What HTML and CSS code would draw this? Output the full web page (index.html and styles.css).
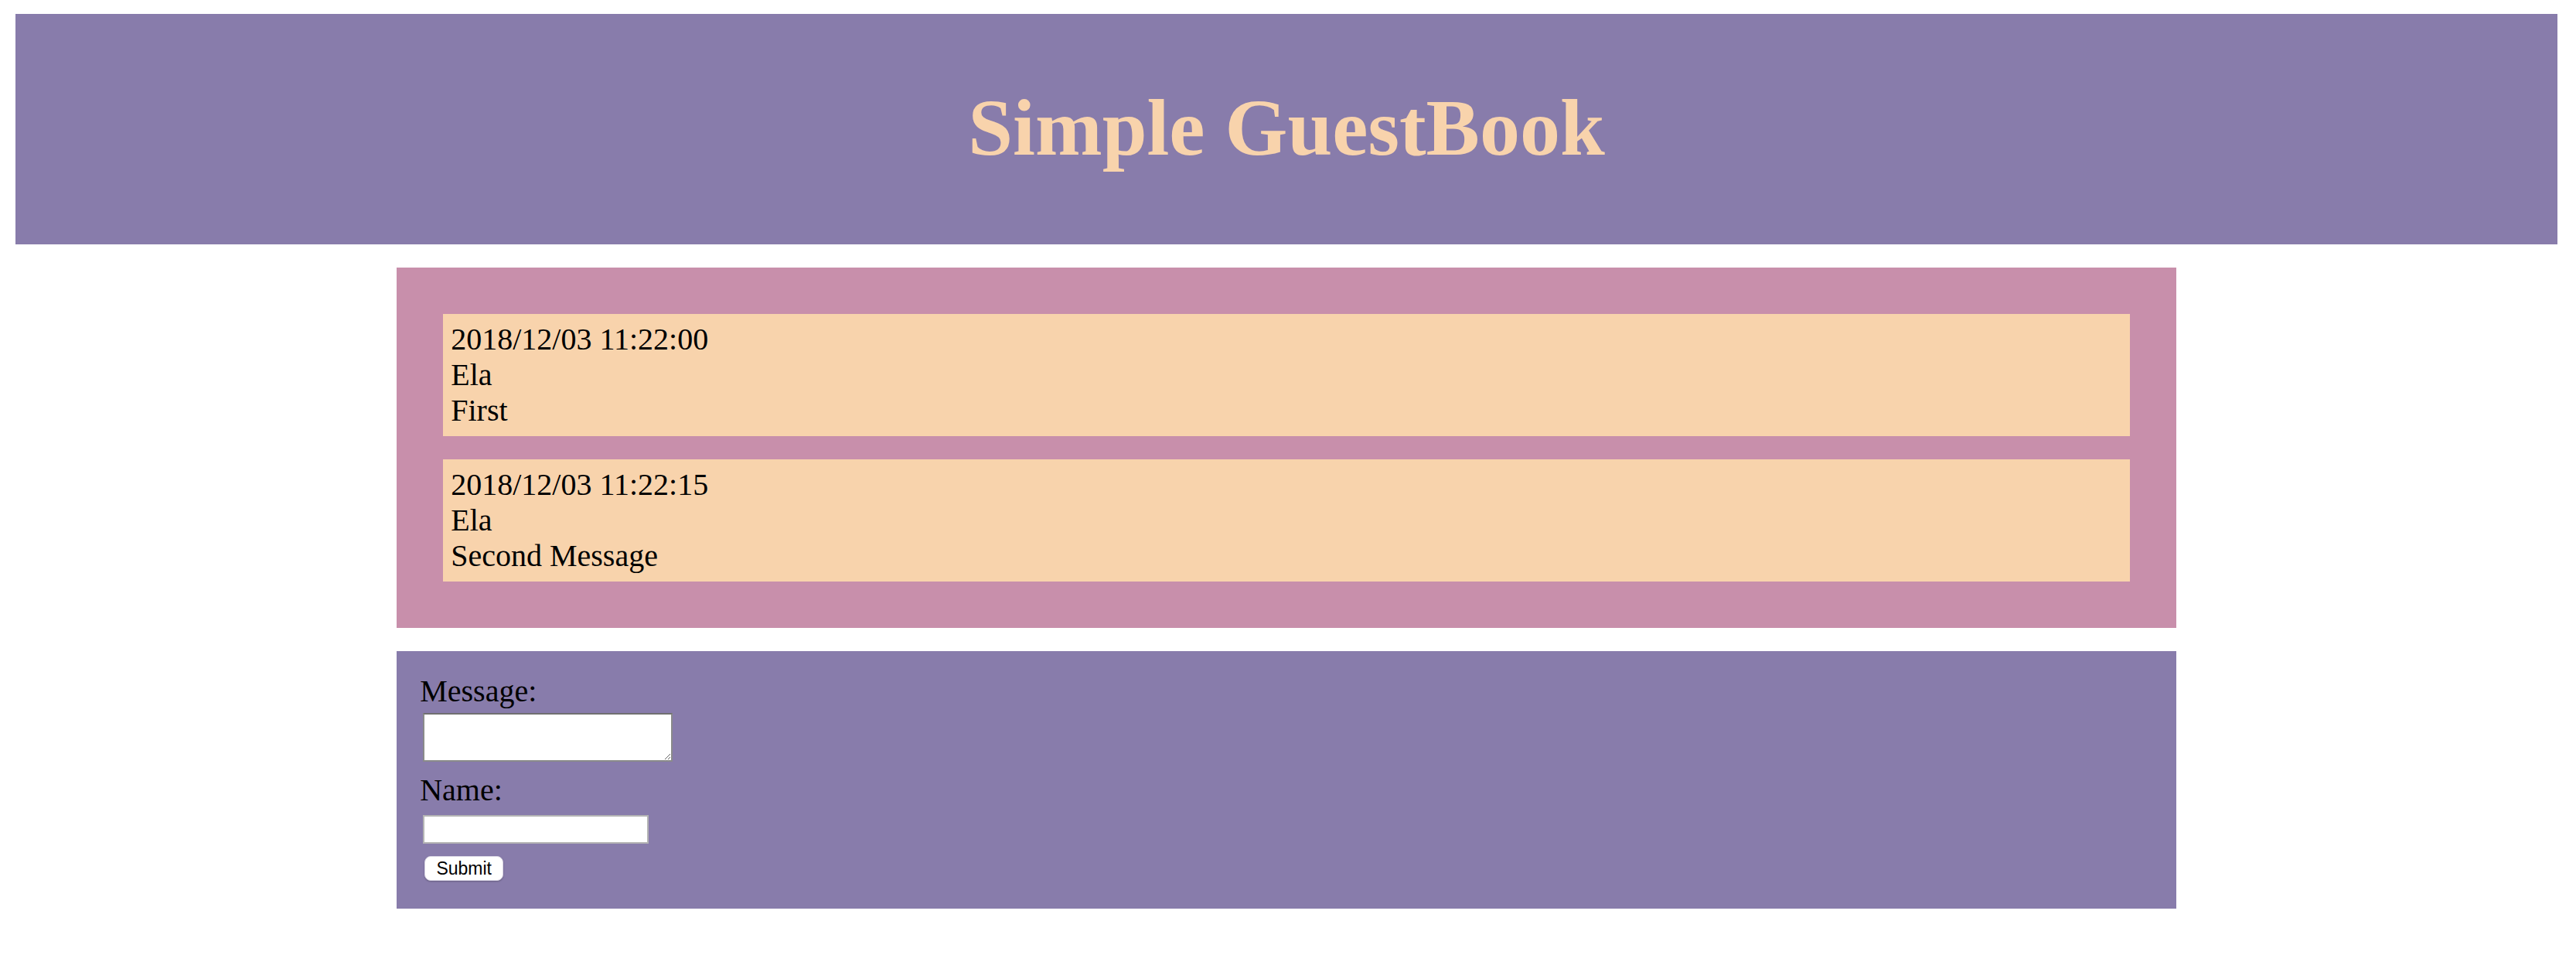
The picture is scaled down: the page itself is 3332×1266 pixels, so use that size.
FILE: index.html
```html
<!DOCTYPE html>
<html>
<head>
<meta charset="utf-8">
<title>Simple GuestBook</title>
<link rel="stylesheet" href="styles.css">
</head>
<body>
<header class="banner">
  <h1 class="title">Simple GuestBook</h1>
</header>
<main>
  <section class="entries">
    <div class="entry">
      <div>2018/12/03 11:22:00</div>
      <div>Ela</div>
      <div>First</div>
    </div>
    <div class="entry">
      <div>2018/12/03 11:22:15</div>
      <div>Ela</div>
      <div>Second Message</div>
    </div>
  </section>
  <form class="post-form">
    <label class="field-label">Message:</label>
    <textarea class="msg-box"></textarea>
    <label class="field-label name-label">Name:</label>
    <input class="name-box" type="text">
    <button class="submit-btn" type="button">Submit</button>
  </form>
</main>
</body>
</html>
```
FILE: styles.css
```css
html, body {
  margin: 0;
  padding: 0;
  background: #ffffff;
}
body {
  padding: 18px 24px 0 20px;
  font-family: "Liberation Serif", "Times New Roman", serif;
  font-size: 40px;
  line-height: 46px;
  color: #000;
}
.banner {
  background: #887cab;
  height: 298px;
  display: flex;
  align-items: center;
  justify-content: center;
}
.title {
  margin: 0;
  font-family: "Liberation Serif", "Times New Roman", serif;
  font-weight: bold;
  font-size: 104px;
  line-height: 120px;
  color: #f8d3ac;
  position: relative;
  top: -2px;
}
main {
  width: 70%;
  margin: 30px auto 0 auto;
  display: flex;
  flex-direction: column;
  gap: 30px;
}
.entries {
  background: #c88fab;
  padding: 60px;
  display: flex;
  flex-direction: column;
  gap: 30px;
}
.entry {
  background: #f8d3ac;
  padding: 10px;
}
.post-form {
  background: #887cab;
  padding: 29px 30px 36px 30px;
  display: flex;
  flex-direction: column;
  align-items: flex-start;
}
.field-label {
  display: block;
  line-height: 46px;
}
.msg-box {
  box-sizing: border-box;
  width: 323px;
  height: 63px;
  margin: 5px 0 0 4px;
  border: 2px solid #8a8a8a;
  border-top-color: #707070;
  background: #fff;
  padding: 0;
  font-family: "Liberation Mono", monospace;
  font-size: 22px;
}
.name-label {
  margin-top: 14px;
}
.name-box {
  box-sizing: border-box;
  width: 292px;
  height: 37px;
  margin: 9px 0 0 4px;
  border: 2px solid #b4b4b4;
  background: #fff;
  padding: 0 4px;
  font-size: 22px;
}
.submit-btn {
  box-sizing: border-box;
  width: 102px;
  height: 32px;
  margin: 16px 0 0 6px;
  padding: 0;
  background: #fff;
  border: 1px solid #d8d4e4;
  border-radius: 8px;
  box-shadow: 0 1px 2px rgba(0,0,0,0.25);
  font-family: "Liberation Sans", Arial, sans-serif;
  font-size: 23px;
  line-height: 30px;
  color: #000;
}
```
